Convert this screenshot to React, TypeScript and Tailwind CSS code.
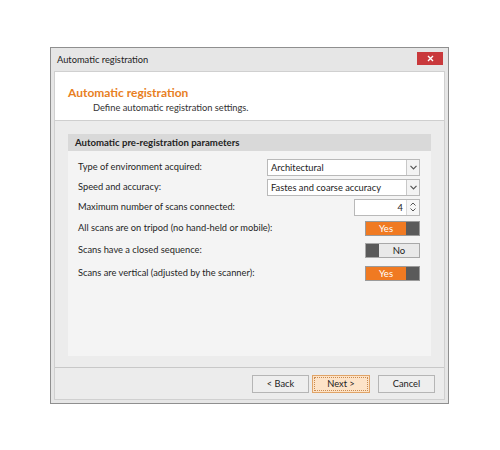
const font = { fontFamily: 'Lato, "Noto Sans", sans-serif' };

function Select({ value }: { value: string }) {
  return (
    <div className="flex h-[17px] w-[153px] border border-[#b9b9b9] bg-white">
      <div className="flex-1 pl-[3px] text-[9.3px] leading-[15px] text-[#222]">{value}</div>
      <div className="flex w-[13px] items-center justify-center border-l border-[#c8c8c8] bg-[#f3f3f3]">
        <svg width="7" height="5" viewBox="0 0 7 5">
          <path d="M0.5 0.8 L3.5 3.8 L6.5 0.8" fill="none" stroke="#555" strokeWidth="1.2" />
        </svg>
      </div>
    </div>
  );
}

function Spinner({ value }: { value: string }) {
  return (
    <div className="flex h-[17px] w-[66px] border border-[#b9b9b9] bg-white">
      <div className="flex-1 pr-[3px] text-right text-[9.3px] leading-[15px] text-[#222]">{value}</div>
      <div className="flex w-[13px] flex-col items-center justify-center gap-[2px] border-l border-[#d8d8d8] bg-[#f6f6f6]">
        <svg width="6" height="4" viewBox="0 0 6 4">
          <path d="M0.5 3.5 L3 1 L5.5 3.5" fill="none" stroke="#555" strokeWidth="1" />
        </svg>
        <svg width="6" height="4" viewBox="0 0 6 4">
          <path d="M0.5 0.5 L3 3 L5.5 0.5" fill="none" stroke="#555" strokeWidth="1" />
        </svg>
      </div>
    </div>
  );
}

function Toggle({ on }: { on: boolean }) {
  if (on) {
    return (
      <div className="flex h-[15px] w-[55px] border border-[#9a9a9a]">
        <div className="flex-1 bg-[#f07a22] text-center text-[9.5px] leading-[13px] text-white">Yes</div>
        <div className="w-[13px] bg-[#5a5a5a]" />
      </div>
    );
  }
  return (
    <div className="flex h-[15px] w-[55px] border border-[#a8a8a8]">
      <div className="w-[13px] bg-[#5a5a5a]" />
      <div className="flex-1 bg-[#e9e9e9] text-center text-[9.5px] leading-[13px] text-[#222]">No</div>
    </div>
  );
}

function Row({ label, children, mt }: { label: string; children: React.ReactNode; mt: string }) {
  return (
    <div className={`flex h-[18px] items-center justify-between ${mt}`}>
      <span className="text-[9.3px] text-[#1f1f1f]">{label}</span>
      {children}
    </div>
  );
}

function Button({ label, primary }: { label: string; primary?: boolean }) {
  return (
    <div
      className={
        primary
          ? "flex h-[18px] w-[58px] items-center justify-center border border-[#e0a468] bg-[#fde3c8] text-[9.3px] text-[#222] outline-1 outline-dotted outline-offset-[-3px] outline-[#c98a4e]"
          : "flex h-[18px] w-[57px] items-center justify-center border border-[#b5b5b5] bg-[#eeeeee] text-[9.3px] text-[#222]"
      }
    >
      {label}
    </div>
  );
}

export default function App() {
  return (
    <div className="h-[450px] w-[500px] bg-white pl-[50px] pt-[47px]" style={font}>
      <div className="flex h-[357px] w-[399px] flex-col border border-[#8f8f8f] bg-[#e6e6e6] px-[3px] pb-[3px]">
        <div className="flex h-[23px] items-center justify-between">
          <span className="pl-[3px] text-[9.3px] text-[#222]">Automatic registration</span>
          <div className="mr-[2px] mt-[-3px] flex h-[13px] w-[26px] items-center justify-center bg-[#c9393c]">
            <svg width="7" height="7" viewBox="0 0 7 7">
              <path d="M1 1 L6 6 M6 1 L1 6" stroke="#fff" strokeWidth="1.4" />
            </svg>
          </div>
        </div>
        <div className="flex flex-1 flex-col border border-[#d0d0d0] bg-[#ececec]">
          <div className="h-[49px] border-b border-[#cfcfcf] bg-white pl-[13px] pt-[12px]">
            <div className="text-[12px] font-bold leading-[17px] text-[#e8801f]">Automatic registration</div>
            <div className="pl-[25px] text-[9.3px] leading-[14px] text-[#333]">Define automatic registration settings.</div>
          </div>
          <div className="px-[13px] pt-[13px]">
            <div className="h-[222px] bg-[#f4f4f4]">
              <div className="h-[17px] bg-[#d9d9d9] pl-[7px] text-[9.6px] font-bold leading-[17px] text-[#222]">
                Automatic pre-registration parameters
              </div>
              <div className="pl-[10px] pr-[11px]">
                <Row label="Type of environment acquired:" mt="mt-[7px]">
                  <Select value="Architectural" />
                </Row>
                <Row label="Speed and accuracy:" mt="mt-[2px]">
                  <Select value="Fastes and coarse accuracy" />
                </Row>
                <Row label="Maximum number of scans connected:" mt="mt-[2px]">
                  <Spinner value="4" />
                </Row>
                <Row label="All scans are on tripod (no hand-held or mobile):" mt="mt-[3px]">
                  <Toggle on />
                </Row>
                <Row label="Scans have a closed sequence:" mt="mt-[4px]">
                  <Toggle on={false} />
                </Row>
                <Row label="Scans are vertical (adjusted by the scanner):" mt="mt-[5px]">
                  <Toggle on />
                </Row>
              </div>
            </div>
          </div>
          <div className="mt-auto flex h-[32px] items-center justify-end border-t border-[#c8c8c8] pr-[9px]">
            <Button label="< Back" />
            <div className="w-[3px]" />
            <Button label="Next >" primary />
            <div className="w-[8px]" />
            <Button label="Cancel" />
          </div>
        </div>
      </div>
    </div>
  );
}
